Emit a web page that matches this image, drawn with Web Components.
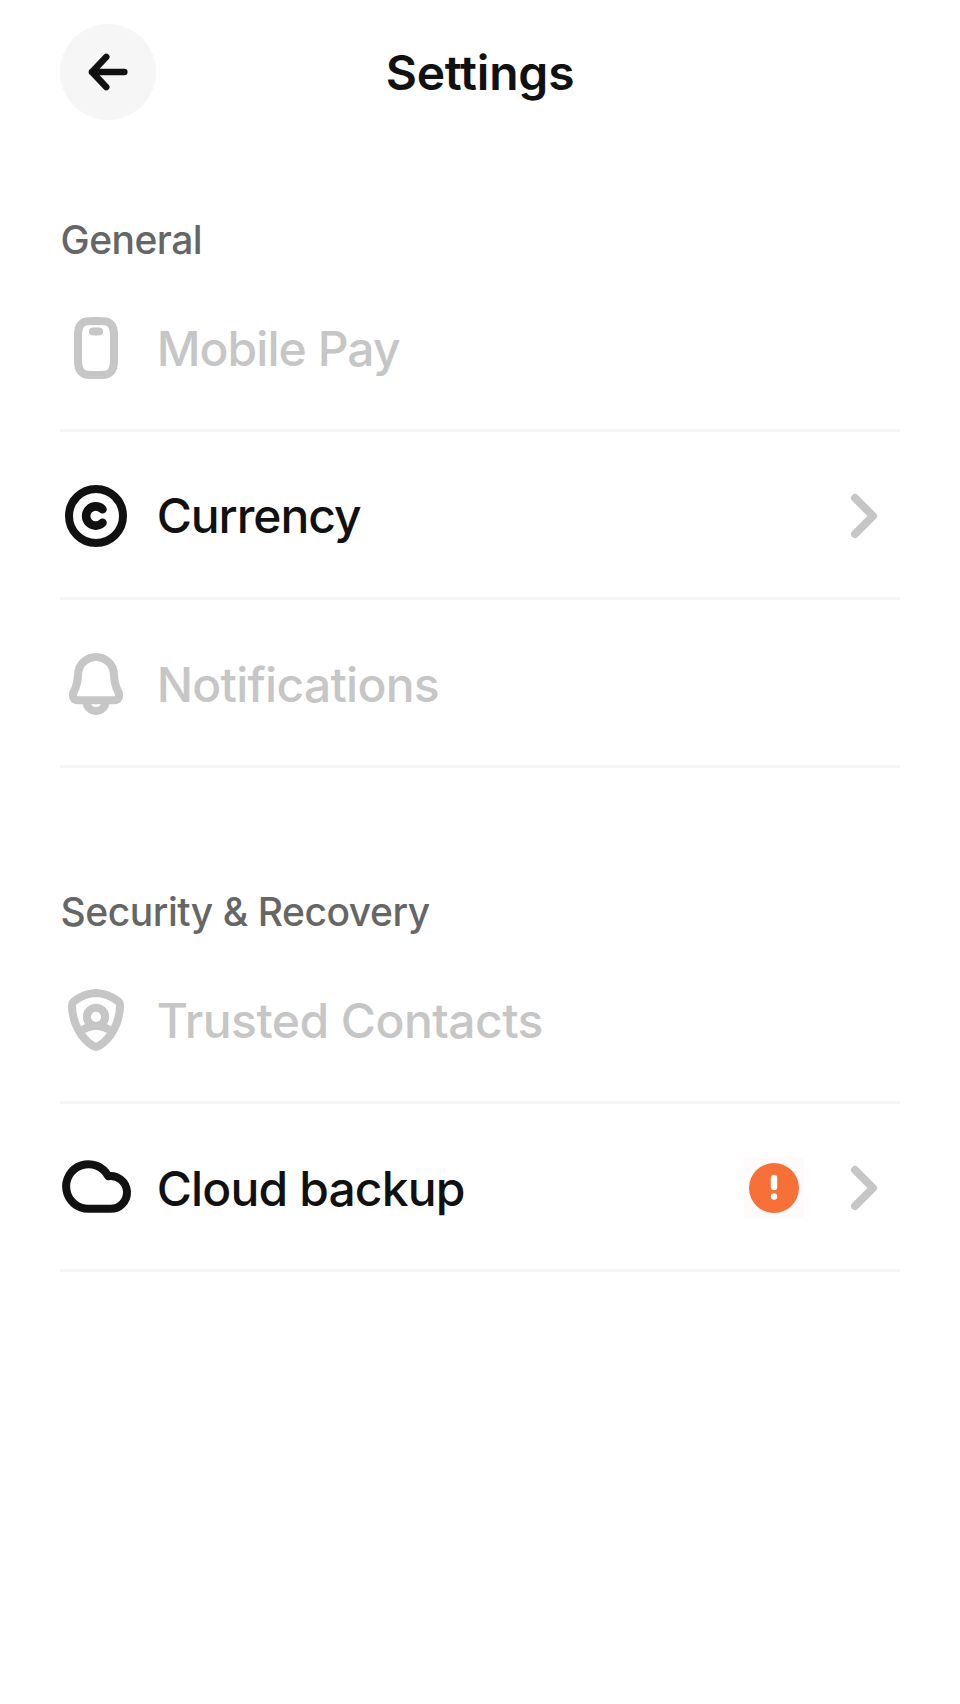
<!DOCTYPE html>
<html lang="en">
<head>
<meta charset="utf-8">
<title>Settings</title>
<style>
html,body{margin:0;background:#fff}
body{font-family:Inter,"Liberation Sans",sans-serif;color:#111;min-height:1704px}
</style>
</head>
<body>
<settings-page>
  <nav-header slot="header">Settings</nav-header>
  <settings-section heading="General" style="--heading-tracking:-.55px">
    <settings-row icon="phone" disabled style="--tracking:-.95px">Mobile Pay</settings-row>
    <settings-row icon="currency" style="--tracking:-1.08px;--label-shift:-1px">Currency</settings-row>
    <settings-row icon="bell" disabled style="--tracking:-.73px">Notifications</settings-row>
  </settings-section>
  <settings-section heading="Security &amp; Recovery">
    <settings-row icon="shield" disabled style="--tracking:-.54px">Trusted Contacts</settings-row>
    <settings-row icon="cloud" style="--tracking:-.86px">Cloud backup<alert-badge slot="status"></alert-badge></settings-row>
  </settings-section>
</settings-page>
<script>
const define = (name, render) => customElements.define(name, class extends HTMLElement {
  constructor() { super(); this.attachShadow({ mode: 'open' }); }
  connectedCallback() { this.shadowRoot.innerHTML = render(this); }
});

// Glyphs are drawn on a 72-unit square
const icons = {
  phone: `<path d="M36 9C46 9 48.3 9.4 50.8 12C53.6 14.8 54 18 54 23V49C54 54 53.6 57.2 50.8 60C48.3 62.6 46 63 36 63C26 63 23.7 62.6 21.2 60C18.4 57.2 18 54 18 49V23C18 18 18.4 14.8 21.2 12C23.7 9.4 26 9 36 9Z"/><path d="M33 19.5H39"/>`,
  currency: `<circle cx="36" cy="36" r="27"/><path d="M42.5 29.2A9.6 9.6 0 1 0 42.5 42.8" stroke-width="8.6"/>`,
  bell: `<path d="M36 9C26.3 9 18.6 16.4 18.1 26C17.8 34 17.2 37 14.2 43C11.3 48.4 13.5 52.3 18.4 52.3H53.6C58.5 52.3 60.7 48.4 57.8 43C54.8 37 54.2 34 53.9 26C53.4 16.4 45.7 9 36 9Z"/><path d="M26.4 53.5A9.6 9.6 0 0 0 45.6 53.5"/>`,
  shield: `<path d="M36 9C43 9.2 51 12.2 57 16.4C59.2 18 60 19 60 21.5C59.8 39 51 54 39.5 61.6C37 63.4 35 63.4 32.5 61.6C21 54 12.2 39 12 21.5C12 19 12.8 18 15 16.4C21 12.2 29 9.2 36 9Z"/><circle cx="36" cy="32.8" r="9.1"/><path d="M20.5 47.4C25 44 29.5 42 36 42C42.5 42 47 44 51.5 47.4" stroke-linecap="butt"/>`,
  cloud: `<path d="M28.6 56.8A22.3 22.3 0 1 1 48.2 24.2A16.4 16.4 0 1 1 49.7 56.8Z"/>`,
  chevron: `<path d="M27 18L45 36L27 54"/>`
};

define('line-icon', el => `
  <style>:host{display:block;flex:none;width:72px;height:72px}svg{display:block}</style>
  <svg width="72" height="72" viewBox="0 0 72 72" fill="none" stroke="currentColor" stroke-width="8" stroke-linecap="round" stroke-linejoin="round">${icons[el.getAttribute('name')]}</svg>`);

define('alert-badge', () => `
  <style>:host{display:block;width:60px;height:60px;background:#fffbfa}svg{display:block}</style>
  <svg width="60" height="60" viewBox="0 0 60 60"><circle cx="30" cy="30" r="25" fill="#f67038"/><rect x="26.8" y="16.7" width="6.4" height="15.6" rx="3.2" fill="#fff"/><circle cx="30" cy="38.5" r="3.2" fill="#fff"/></svg>`);

define('nav-header', () => `
  <style>
  :host{display:grid;grid-template-columns:96px 1fr 96px;align-items:center;height:96px}
  button{all:unset;display:block;width:96px;height:96px;border-radius:50%;background:#f6f6f6}
  svg{display:block}
  h1{margin:0;padding-top:2px;text-align:center;font-size:48px;line-height:60px;font-weight:600;letter-spacing:-.2px}
  </style>
  <button aria-label="Back"><svg width="96" height="96" viewBox="0 0 96 96" fill="none" stroke="#111" stroke-width="6.6" stroke-linecap="round" stroke-linejoin="round"><path d="M46.2 33L32 48L46.2 63M32 48H64.3"/></svg></button>
  <h1><slot></slot></h1>`);

define('settings-row', el => {
  const off = el.hasAttribute('disabled');
  return `
  <style>
  :host{display:flex;align-items:center;gap:24px;box-sizing:border-box;height:168px;padding:48px 0 45px;border-bottom:3px solid #f6f6f6;color:${off ? '#c6c6c6' : '#111'}}
  .label{flex:1;font-size:48px;line-height:60px;font-weight:500;letter-spacing:var(--tracking,-.5px);padding:1px 0 0 .7px;transform:translateY(var(--label-shift,0))}
  .go{color:#c6c6c6}
  </style>
  <line-icon name="${el.getAttribute('icon')}"></line-icon>
  <div class="label"><slot></slot></div>
  <slot name="status"></slot>
  ${off ? '' : '<line-icon class="go" name="chevron"></line-icon>'}`;
});

define('settings-section', el => `
  <style>
  :host{display:block}
  h2{margin:0;box-sizing:border-box;height:48px;padding-left:.6px;font-size:39px;line-height:48px;font-weight:500;color:#666;letter-spacing:var(--heading-tracking,-.47px)}
  </style>
  <h2>${el.getAttribute('heading').replace('&', '&amp;')}</h2><slot></slot>`);

define('settings-page', () => `
  <style>
  :host{display:block;padding:24px 60px 0}
  main{display:flex;flex-direction:column;gap:120px;padding-top:96px}
  </style>
  <slot name="header"></slot>
  <main><slot></slot></main>`);
</script>
</body>
</html>
